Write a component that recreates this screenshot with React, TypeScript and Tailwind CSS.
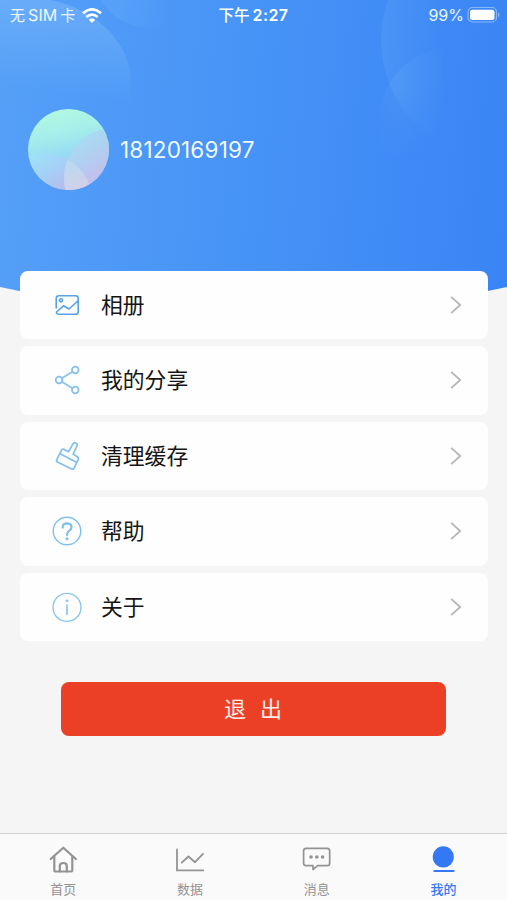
import type { ReactNode } from "react";

function HeaderArt() {
  return (
    <svg className="absolute left-0 top-0 h-[330px] w-[507px]" viewBox="0 0 507 330" aria-hidden="true">
      <defs>
        <linearGradient id="sky" gradientUnits="userSpaceOnUse" x1="0" y1="130" x2="507" y2="175">
          <stop offset="0" stopColor="#559ff7" />
          <stop offset="0.5" stopColor="#4693f7" />
          <stop offset="1" stopColor="#3a85f5" />
        </linearGradient>
        <linearGradient id="bubbleA" gradientUnits="userSpaceOnUse" x1="60" y1="10" x2="48" y2="92">
          <stop offset="0" stopColor="#8bc4fb" stopOpacity="0.36" />
          <stop offset="1" stopColor="#8bc4fb" stopOpacity="0" />
        </linearGradient>
        <linearGradient id="bubbleB" gradientUnits="userSpaceOnUse" x1="380" y1="0" x2="446" y2="0">
          <stop offset="0" stopColor="#7cbcfb" stopOpacity="0.17" />
          <stop offset="1" stopColor="#7cbcfb" stopOpacity="0" />
        </linearGradient>
        <linearGradient id="bubbleC" gradientUnits="userSpaceOnUse" x1="377" y1="0" x2="446" y2="0">
          <stop offset="0" stopColor="#7cbcfb" stopOpacity="0.06" />
          <stop offset="0.3" stopColor="#7cbcfb" stopOpacity="0.14" />
          <stop offset="1" stopColor="#7cbcfb" stopOpacity="0" />
        </linearGradient>
        <linearGradient id="bubbleD" gradientUnits="userSpaceOnUse" x1="120" y1="0" x2="170" y2="10">
          <stop offset="0" stopColor="#8bc4fb" stopOpacity="0.14" />
          <stop offset="1" stopColor="#8bc4fb" stopOpacity="0" />
        </linearGradient>
        <linearGradient id="fadeDown" x1="0" y1="0" x2="0" y2="1">
          <stop offset="0.55" stopColor="white" />
          <stop offset="1" stopColor="black" />
        </linearGradient>
        <mask id="rightFade">
          <rect x="360" y="0" width="147" height="160" fill="url(#fadeDown)" />
        </mask>
      </defs>
      <path d="M0 0H507V287Q254 343 0 287Z" fill="url(#sky)" />
      <path d="M0 0H50C95 8 131 43 131 82V100H0Z" fill="url(#bubbleA)" />
      <circle cx="150" cy="-30" r="58" fill="url(#bubbleD)" />
      <g mask="url(#rightFade)">
        <circle cx="500" cy="40" r="119" fill="url(#bubbleB)" />
        <circle cx="455" cy="125" r="78" fill="url(#bubbleC)" />
      </g>
    </svg>
  );
}

function Avatar() {
  return (
    <svg className="size-[81px] shrink-0" viewBox="0 0 81 81" aria-hidden="true">
      <defs>
        <linearGradient id="face" x1="0.3" y1="0" x2="0.5" y2="1">
          <stop offset="0" stopColor="#b2f9e2" />
          <stop offset="0.3" stopColor="#a6eeea" />
          <stop offset="0.58" stopColor="#96dbf4" />
          <stop offset="1" stopColor="#a9c5f8" />
        </linearGradient>
        <linearGradient id="petalL" gradientUnits="userSpaceOnUse" x1="12" y1="43" x2="36" y2="81">
          <stop offset="0" stopColor="#a0e0f8" />
          <stop offset="0.5" stopColor="#a5cff7" />
          <stop offset="1" stopColor="#b8bbeb" />
        </linearGradient>
        <linearGradient id="petalR" gradientUnits="userSpaceOnUse" x1="48" y1="28" x2="72" y2="66">
          <stop offset="0" stopColor="#a7def3" />
          <stop offset="0.5" stopColor="#b0d0f0" />
          <stop offset="1" stopColor="#c2c0ec" />
        </linearGradient>
        <linearGradient id="overlap" gradientUnits="userSpaceOnUse" x1="42" y1="50" x2="52" y2="80">
          <stop offset="0" stopColor="#b7d9f2" />
          <stop offset="1" stopColor="#d3cfe8" />
        </linearGradient>
        <clipPath id="round"><circle cx="40.5" cy="40.5" r="40.5" /></clipPath>
        <clipPath id="right"><circle cx="86" cy="69" r="50" /></clipPath>
      </defs>
      <g clipPath="url(#round)">
        <rect width="81" height="81" fill="url(#face)" />
        <circle cx="15" cy="94" r="50" fill="url(#petalL)" />
        <circle cx="86" cy="69" r="50" fill="url(#petalR)" />
        <circle cx="15" cy="94" r="50" fill="url(#overlap)" clipPath="url(#right)" />
      </g>
    </svg>
  );
}

function StatusBar() {
  return (
    <div className="grid h-[30px] grid-cols-3 items-center text-[16px] leading-[30px] text-white/90">
      <div className="flex items-center pl-[10px]">
        <span className="pt-[2px] text-[15px] leading-[28px]">无</span>
        <span className="ml-[3px] tracking-[0.1px]">SIM</span>
        <span className="ml-[3px] pt-[2px] text-[15px] leading-[28px]">卡</span>
        <svg className="ml-[6.5px] h-[15px] w-[20px]" viewBox="0 0 20 15" fill="none" stroke="white" strokeWidth="2.7" aria-hidden="true">
          <path d="M1 5.2Q10 -2.5 19 5.2" />
          <path d="M4.3 9Q10 4.2 15.7 9" />
          <path d="M10 15L6.9 11.7Q10 9.5 13.1 11.7Z" fill="white" stroke="none" />
        </svg>
      </div>
      <div className="flex items-center justify-center text-white">
        <span className="pt-[2px] text-[15.5px] font-medium leading-[28px]">下午</span>
        <span className="ml-[3px] font-semibold tracking-[0.4px]">2:27</span>
      </div>
      <div className="flex items-center justify-end pr-[7px]">
        <span className="text-[16px]">99%</span>
        <svg className="ml-[3px] h-[17px] w-[33px]" viewBox="0 0 33 17" aria-hidden="true">
          <rect x="1" y="0.5" width="28.5" height="14.5" rx="4.5" fill="none" stroke="white" strokeOpacity="0.4" strokeWidth="1.2" />
          <rect x="3" y="2.7" width="24.5" height="10.2" rx="2.5" fill="white" />
          <path d="M31 5.5V10Q32.5 9.5 32.5 7.7T31 5.5Z" fill="white" fillOpacity="0.4" />
        </svg>
      </div>
    </div>
  );
}

const icons: Record<string, ReactNode> = {
  album: (
    <g stroke="#57a3e4" strokeWidth="1.6">
      <path d="M4.2 18V8.3Q4.2 5.7 6.9 5.7H23.5Q26.2 5.7 26.2 8.3V21.7Q26.2 24.3 23.5 24.3H7Q4.3 24.3 4.5 22L11.5 15.8L17 19L25.8 11" />
      <circle cx="9" cy="10.3" r="1.7" fill="#a9d3f3" strokeWidth="1.3" />
    </g>
  ),
  share: (
    <g stroke="#86c1eb" strokeWidth="1.7">
      <circle cx="7" cy="15" r="3.3" />
      <circle cx="23.3" cy="5" r="3.3" />
      <circle cx="23.3" cy="25" r="3.3" />
      <path d="M9.8 13.2L20.5 6.7M9.8 16.8L20.5 23.3" />
    </g>
  ),
  brush: (
    <g stroke="#82bfea" strokeWidth="1.7">
      <path d="M9.7 8.9Q10.3 7.6 11.7 8.2L16.6 10.7L21 2.9Q22 1.2 23.8 2Q25.8 3.1 25 5L21.1 13L25.3 15.7Q27 16.9 26.1 18.8L22 27.1Q21.3 28.7 19.7 28L5.5 21.1Q4 20.3 4.7 18.8Z" />
      <path d="M8 12.7L24.5 21.3" />
    </g>
  ),
  help: (
    <g stroke="#82bfea" strokeWidth="1.4">
      <circle cx="15" cy="15" r="13.8" />
      <path d="M10.6 11.6Q10.7 7.3 15.1 7.3Q19.5 7.5 19.5 11.1Q19.4 13.3 17 14.9Q15 16.3 15 18.9" strokeWidth="2.2" />
      <circle cx="15" cy="22.8" r="1.5" fill="#82bfea" stroke="none" />
    </g>
  ),
  about: (
    <g stroke="#8dc5ec" strokeWidth="1.4">
      <circle cx="15" cy="15.4" r="14" />
      <path d="M15 13V22.3" strokeWidth="1.7" />
      <circle cx="15" cy="8.8" r="1.4" fill="#8dc5ec" stroke="none" />
    </g>
  ),
};

const menu = [
  { icon: "album", label: "相册" },
  { icon: "share", label: "我的分享" },
  { icon: "brush", label: "清理缓存" },
  { icon: "help", label: "帮助" },
  { icon: "about", label: "关于" },
];

function MenuRow({ icon, label }: { icon: string; label: string }) {
  return (
    <button className="flex h-[68.8px] w-full items-center rounded-[8px] bg-[#fefefe] pl-[32px] pr-[26px] text-left">
      <svg className="size-[30px] overflow-visible" viewBox="0 0 30 30" fill="none" strokeLinecap="round" strokeLinejoin="round" aria-hidden="true">
        {icons[icon]}
      </svg>
      <span className="ml-[19px] flex-1 text-[21.8px] leading-[30px] text-[#151515]">{label}</span>
      <svg className="h-[20px] w-[12px]" viewBox="0 0 12 20" fill="none" stroke="#b5b5b5" strokeWidth="1.8" aria-hidden="true">
        <path d="M1.2 1.8L10.2 10L1.2 18.2" />
      </svg>
    </button>
  );
}

const tabs: { label: string; active?: boolean; art: ReactNode }[] = [
  {
    label: "首页",
    art: (
      <g>
        <path d="M2.7 15L15.3 3.7L27.9 15" />
        <path d="M6.3 12.5V26Q6.3 27.5 7.8 27.5H22.8Q24.3 27.5 24.3 26V12.5" />
        <path d="M11.8 27.5V22Q11.8 19 15.3 19Q18.8 19 18.8 22V27.5" />
      </g>
    ),
  },
  {
    label: "数据",
    art: (
      <g strokeWidth="1.8">
        <path d="M2 5.5V26.4H28.3" strokeLinejoin="miter" />
        <path d="M6.7 18.7L13.5 12.5L20 18.2L28 9.8" />
      </g>
    ),
  },
  {
    label: "消息",
    art: (
      <g strokeWidth="1.7">
        <path d="M4.3 4.3H25Q27.7 4.3 27.7 7V19Q27.7 21.7 25 21.7H15.7L11 25.5V21.7H4.3Q1.6 21.7 1.6 19V7Q1.6 4.3 4.3 4.3Z" />
        <g fill="currentColor" stroke="none">
          <circle cx="9" cy="13" r="1.8" /><circle cx="14.8" cy="13" r="1.8" /><circle cx="20.6" cy="13" r="1.8" />
        </g>
      </g>
    ),
  },
  {
    label: "我的",
    active: true,
    art: (
      <g>
        <circle cx="14.3" cy="12.9" r="10.6" fill="currentColor" stroke="none" />
        <path d="M5.4 27H24.6" />
      </g>
    ),
  },
];

export default function App() {
  return (
    <div
      className="relative flex h-[900px] w-[507px] flex-col overflow-hidden bg-[#f5f5f5]"
      style={{ fontFamily: 'Inter, "Noto Sans CJK SC", sans-serif' }}
    >
      <HeaderArt />
      <header className="relative h-[270.6px]">
        <StatusBar />
        <div className="flex items-center pl-[28px] pt-[78.5px]">
          <Avatar />
          <span className="ml-[11px] pt-[2px] text-[22.5px] leading-[30px] tracking-[0.18px] text-white/95">18120169197</span>
        </div>
      </header>
      <main className="relative flex flex-1 flex-col">
        <nav className="flex flex-col gap-[6.7px] pl-[20px] pr-[19px]">
          {menu.map((item) => <MenuRow key={item.label} {...item} />)}
        </nav>
        <button className="ml-[61.4px] mt-[40.5px] flex h-[54px] w-[385px] items-center justify-center gap-[14px] rounded-[8px] bg-[#eb4026] pr-[2px] pt-[2px] text-[22px] text-white/90">
          <span>退</span>
          <span>出</span>
        </button>
      </main>
      <footer className="relative grid h-[67px] grid-cols-4 border-t border-[#d0d0d0] bg-[#fafafa]">
        {tabs.map((tab) => (
          <div key={tab.label} className={`flex flex-col items-center pt-[10px] ${tab.active ? "font-medium text-[#3478f6]" : "text-[#939393]"}`}>
            <svg className="size-[30px]" viewBox="0 0 30 30" fill="none" stroke="currentColor" strokeWidth="2.2" strokeLinecap="round" strokeLinejoin="round" aria-hidden="true">
              {tab.art}
            </svg>
            <span className="mt-[5px] text-[13px] leading-[20px]">{tab.label}</span>
          </div>
        ))}
      </footer>
    </div>
  );
}
